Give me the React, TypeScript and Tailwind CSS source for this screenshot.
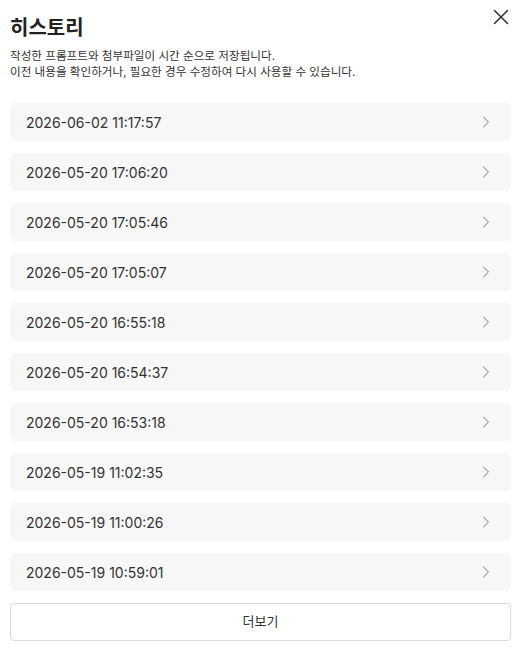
import { ChevronRight, X } from "lucide-react";

const histories = [
  "2026-06-02 11:17:57",
  "2026-05-20 17:06:20",
  "2026-05-20 17:05:46",
  "2026-05-20 17:05:07",
  "2026-05-20 16:55:18",
  "2026-05-20 16:54:37",
  "2026-05-20 16:53:18",
  "2026-05-19 11:02:35",
  "2026-05-19 11:00:26",
  "2026-05-19 10:59:01",
];

export default function App() {
  return (
    <div
      className="min-h-screen bg-white pl-[10px] pr-[5px] text-[#222]"
      style={{ fontFamily: 'Inter, "Noto Sans CJK KR", sans-serif' }}
    >
      {/* Header */}
      <div className="flex items-start justify-between pt-[14px]">
        <h2 className="text-[20px] font-semibold leading-[28px] text-[#222]">히스토리</h2>
        <button className="mt-[-10px] mr-[-3px] text-[#333]">
          <X className="w-[26px] h-[26px]" strokeWidth={1.4} />
        </button>
      </div>
      <p className="mt-[6px] text-[11.6px] leading-[16px] text-[#333]">
        작성한 프롬프트와 첨부파일이 시간 순으로 저장됩니다.
        <br />
        이전 내용을 확인하거나, 필요한 경우 수정하여 다시 사용할 수 있습니다.
      </p>

      {/* History list */}
      <div className="mt-[23px] flex flex-col gap-[12px]">
        {histories.map((h) => (
          <div
            key={h}
            className="flex h-[38px] items-center justify-between rounded-[5px] bg-[#f7f7f7] pl-[16px] pr-[15px]"
          >
            <span className="text-[14px] text-[#333]">{h}</span>
            <ChevronRight className="w-[20px] h-[20px] text-[#777]" strokeWidth={1.2} />
          </div>
        ))}
        <button className="h-[38px] rounded-[4px] border border-[#dcdcdc] bg-white text-[13px] text-[#333]">
          더보기
        </button>
      </div>
    </div>
  );
}
